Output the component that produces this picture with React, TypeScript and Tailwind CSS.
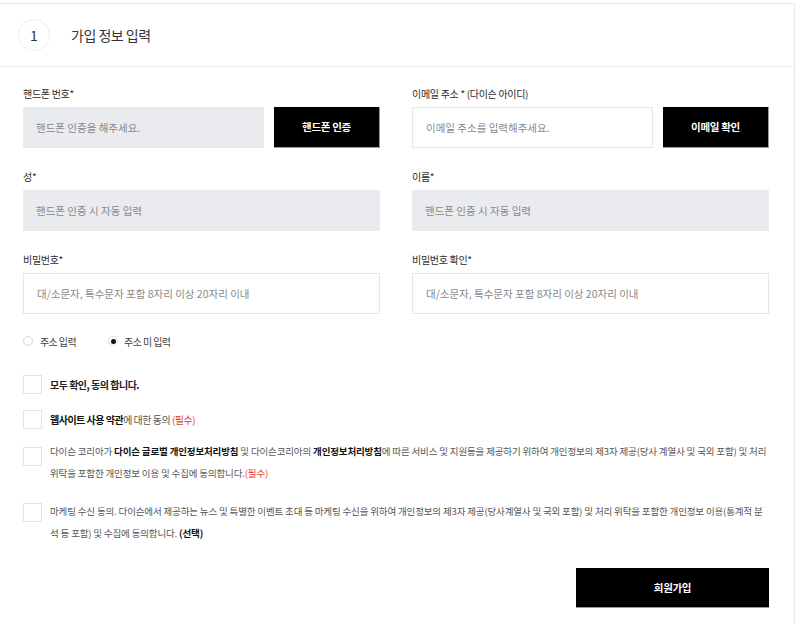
const font = { fontFamily: '"Noto Sans CJK KR", "Noto Sans", sans-serif' };

function Field({
  label,
  placeholder,
  filled = false,
  button,
}: {
  label: string;
  placeholder: string;
  filled?: boolean;
  button?: string;
}) {
  return (
    <div className="flex flex-col">
      <div className="h-[14px] text-[10px] leading-[14px] tracking-[-0.3px] text-[#2a2a2a] mb-[6px]">{label}</div>
      <div className="flex gap-[10px]">
        <div
          className={`flex-1 h-[41px] flex items-center pl-[13px] text-[10.5px] tracking-[0px] text-[#888] ${
            filled ? 'bg-[#e9ebee]' : 'bg-white border border-[#e6e6e6]'
          }`}
        >
          {placeholder}
        </div>
        {button && (
          <button className="w-[106px] h-[41px] bg-black text-white text-[10.5px] font-bold tracking-[-0.3px] border-b border-r border-[#9a9a9a]">
            {button}
          </button>
        )}
      </div>
    </div>
  );
}

function Box() {
  return <div className="w-[19px] h-[19px] shrink-0 border border-[#e3e3e3] bg-white" />;
}

export default function App() {
  return (
    <div className="w-[800px] h-[624px] bg-white pt-[3px] overflow-hidden" style={font}>
      <div className="w-[795px] h-[621px] border-t border-r border-[#e8e8e8]">
        {/* header */}
        <div className="h-[63px] border-b border-[#ececec] flex items-center pl-[18px]">
          <div className="w-[32px] h-[32px] rounded-full border border-[#ededed] flex items-center justify-center text-[14px] text-[#333]">
            1
          </div>
          <div className="ml-[21px] text-[14px] tracking-[-0.5px] text-[#333]">가입 정보 입력</div>
        </div>

        <div className="pl-[23px] pr-[25px] pt-[20px]">
          <div className="grid grid-cols-2 gap-x-[32px] gap-y-[22px]">
            <Field label="핸드폰 번호*" placeholder="핸드폰 인증을 해주세요." filled button="핸드폰 인증" />
            <Field label="이메일 주소 * (다이슨 아이디)" placeholder="이메일 주소를 입력해주세요." button="이메일 확인" />
            <Field label="성*" placeholder="핸드폰 인증 시 자동 입력" filled />
            <Field label="이름*" placeholder="핸드폰 인증 시 자동 입력" filled />
            <Field label="비밀번호*" placeholder="대/소문자, 특수문자 포함 8자리 이상 20자리 이내" />
            <Field label="비밀번호 확인*" placeholder="대/소문자, 특수문자 포함 8자리 이상 20자리 이내" />
          </div>

          {/* radios */}
          <div className="mt-[20px] h-[14px] flex items-center text-[10px] tracking-[-0.6px] text-[#444]">
            <div className="flex items-center">
              <span className="w-[10px] h-[10px] rounded-full border border-[#d8d8d8] bg-white" />
              <span className="ml-[7px]">주소 입력</span>
            </div>
            <div className="flex items-center ml-[32px]">
              <span className="w-[10px] h-[10px] rounded-full border border-[#e2e2e2] flex items-center justify-center">
                <span className="w-[5px] h-[5px] rounded-full bg-[#111]" />
              </span>
              <span className="ml-[6px]">주소 미 입력</span>
            </div>
          </div>

          {/* agreements */}
          <div className="mt-[25px] flex items-center gap-[8px] h-[22px]">
            <Box />
            <span className="text-[10px] font-bold tracking-[-0.5px] text-[#222]">모두 확인, 동의 합니다.</span>
          </div>
          <div className="mt-[13px] flex items-center gap-[8px] h-[22px]">
            <Box />
            <span className="text-[10px] tracking-[-0.5px] text-[#555]">
              <b className="text-[#111]">웹사이트 사용 약관</b>에 대한 동의 <span className="text-[#e53935]">(필수)</span>
            </span>
          </div>
          <div className="mt-[10px] flex items-start gap-[8px]">
            <div className="mt-[7px]">
              <Box />
            </div>
            <p className="text-[9.5px] leading-[22px] tracking-[-0.15px] text-[#555]">
              다이슨 코리아가 <b className="text-[#111]">다이슨 글로벌 개인정보처리방침</b> 및 다이슨코리아의{' '}
              <b className="text-[#111]">개인정보처리방침</b>에 따른 서비스 및 지원등을 제공하기 위하여 개인정보의 제3자 제공(당사 계열사 및 국외 포함) 및 처리
              <br />
              위탁을 포함한 개인정보 이용 및 수집에 동의합니다.<span className="text-[#e53935]">(필수)</span>
            </p>
          </div>
          <div className="mt-[16px] flex items-start gap-[8px]">
            <div className="mt-[3px]">
              <Box />
            </div>
            <p className="text-[9.5px] leading-[22px] tracking-[-0.15px] text-[#555]">
              마케팅 수신 동의. 다이슨에서 제공하는 뉴스 및 특별한 이벤트 초대 등 마케팅 수신을 위하여 개인정보의 제3자 제공(당사계열사 및 국외 포함) 및 처리 위탁을 포함한 개인정보 이용(통계적 분
              <br />
              석 등 포함) 및 수집에 동의합니다. <b className="text-[#111]">(선택)</b>
            </p>
          </div>

          <div className="mt-[24px] flex justify-end">
            <button className="w-[193px] h-[40px] bg-black text-white text-[10.5px] font-bold tracking-[-0.3px] border-b border-[#9a9a9a]">
              회원가입
            </button>
          </div>
        </div>
      </div>
    </div>
  );
}
